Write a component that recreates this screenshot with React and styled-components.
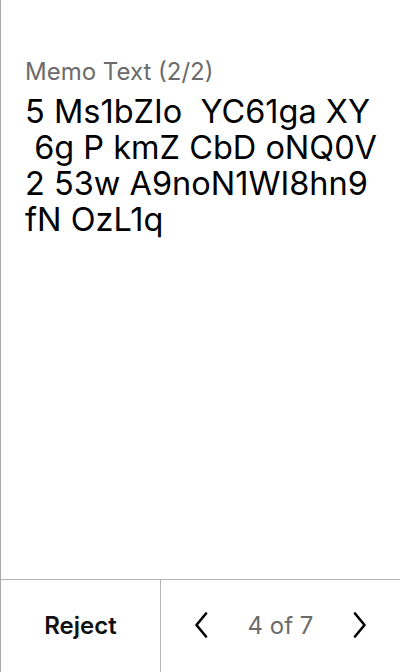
import styled, { createGlobalStyle } from 'styled-components';

const GlobalStyle = createGlobalStyle`
  body {
    margin: 0;
    background: #fff;
    font-family: Inter, "Noto Sans", sans-serif;
  }
`;

const Screen = styled.div`
  width: 400px;
  height: 672px;
  box-sizing: border-box;
  border-left: 1px solid #a8a8a8;
  display: flex;
  flex-direction: column;
`;

const Content = styled.div`
  flex: 1;
  padding: 57px 10px 0 24px;
`;

const Label = styled.div`
  font-size: 24px;
  line-height: 30px;
  color: #6b6b6b;
  margin-bottom: 7px;
`;

const Memo = styled.div`
  font-size: 32.5px;
  line-height: 36px;
  color: #000;
  white-space: pre;
`;

const Footer = styled.div`
  height: 92px;
  border-top: 1px solid #b3b3b3;
  display: flex;
`;

const RejectButton = styled.button`
  width: 160px;
  border: none;
  border-right: 1px solid #b3b3b3;
  background: none;
  font-family: inherit;
  font-size: 24px;
  font-weight: 600;
  color: #111;
  padding: 0 0 2px;
`;

const Pager = styled.div`
  flex: 1;
  display: flex;
  align-items: center;
  justify-content: center;
  gap: 40px;
  padding-bottom: 2px;
`;

const PageText = styled.span`
  font-size: 24px;
  color: #6b6b6b;
`;

const Chevron = ({ dir }) => (
  <svg width="14" height="26" viewBox="0 0 14 26" fill="none">
    <path
      d={dir === 'left' ? 'M12 1.5 L2.5 13 L12 24.5' : 'M2 1.5 L11.5 13 L2 24.5'}
      stroke="#000"
      strokeWidth="2.6"
      strokeLinecap="round"
      strokeLinejoin="round"
    />
  </svg>
);

const lines = [
  '5 Ms1bZIo  YC61ga XY',
  ' 6g P kmZ CbD oNQ0V',
  '2 53w A9noN1WI8hn9',
  'fN OzL1q',
];

const App = () => {
  return (
    <>
      <GlobalStyle />
      <Screen>
        <Content>
          <Label>Memo Text (2/2)</Label>
          <Memo>{lines.join('\n')}</Memo>
        </Content>
        <Footer>
          <RejectButton>Reject</RejectButton>
          <Pager>
            <Chevron dir="left" />
            <PageText>4 of 7</PageText>
            <Chevron dir="right" />
          </Pager>
        </Footer>
      </Screen>
    </>
  );
};

export default App;
